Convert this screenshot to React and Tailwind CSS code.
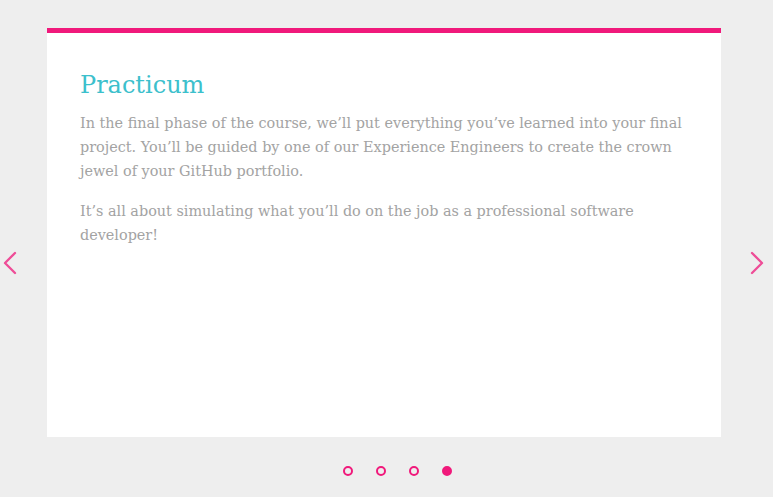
import { ChevronLeft, ChevronRight } from 'lucide-react'

const slides = [0, 1, 2, 3]

export default function App() {
  const active = 3

  return (
    <div className="w-[773px] h-[497px] bg-[#eeeeee] flex flex-col items-center pt-[28px] font-['DejaVu_Serif',serif] overflow-hidden">
      <div className="w-full flex items-start">
        {/* Prev */}
        <button className="w-[47px] shrink-0 mt-[215px] flex items-center justify-start -ml-[10px] text-[#ee4d97]">
          <ChevronLeft size={40} strokeWidth={1.4} className="shrink-0" />
        </button>

        {/* Card */}
        <div className="w-[674px] shrink-0 h-[409px] ml-[10px] bg-white border-t-[5px] border-[#f0197b] pl-[33px] pr-[28px] pt-[36px]">
          <h2 className="text-[24px] leading-[32px] text-[#3cc0cc] mb-[10px]">Practicum</h2>
          <p className="text-[14.4px] leading-[24px] text-[#a3a3a3] mb-[16px]">
            In the final phase of the course, we’ll put everything you’ve learned into your final
            project. You’ll be guided by one of our Experience Engineers to create the crown
            jewel of your GitHub portfolio.
          </p>
          <p className="text-[14.4px] leading-[24px] text-[#a3a3a3]">
            It’s all about simulating what you’ll do on the job as a professional software
            developer!
          </p>
        </div>

        {/* Next */}
        <button className="w-[64px] shrink-0 mt-[215px] flex items-center justify-start pl-[16px] text-[#ee4d97]">
          <ChevronRight size={40} strokeWidth={1.4} className="shrink-0" />
        </button>
      </div>

      {/* Dots */}
      <div className="flex gap-[23px] mt-[29px] ml-[22px]">
        {slides.map((i) => (
          <span
            key={i}
            className={`w-[10px] h-[10px] rounded-full border-2 border-[#f0197b] ${
              i === active ? 'bg-[#f0197b]' : 'bg-transparent'
            }`}
          />
        ))}
      </div>
    </div>
  )
}
